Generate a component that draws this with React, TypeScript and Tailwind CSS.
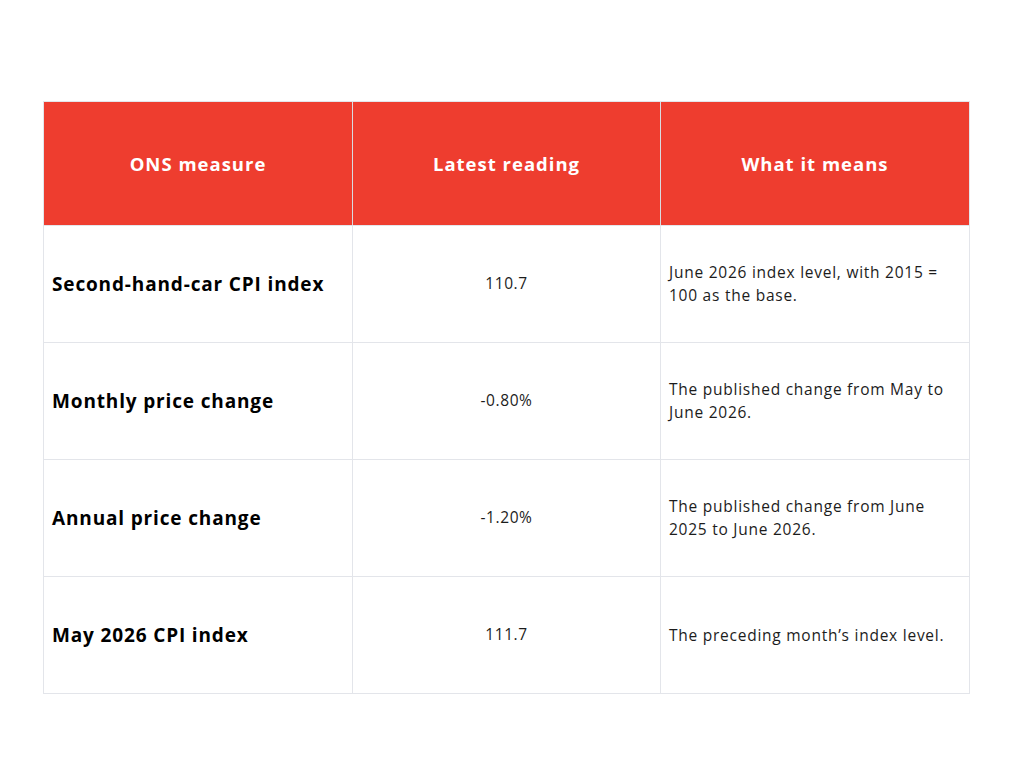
const rows = [
  {
    measure: "Second-hand-car CPI index",
    reading: "110.7",
    meaning: "June 2026 index level, with 2015 = 100 as the base.",
  },
  {
    measure: "Monthly price change",
    reading: "-0.80%",
    meaning: "The published change from May to June 2026.",
  },
  {
    measure: "Annual price change",
    reading: "-1.20%",
    meaning: "The published change from June 2025 to June 2026.",
  },
  {
    measure: "May 2026 CPI index",
    reading: "111.7",
    meaning: "The preceding month\u2019s index level.",
  },
];

export default function App() {
  return (
    <div
      className="w-[1024px] h-[768px] bg-white pt-[101px] pl-[43px]"
      style={{ fontFamily: "'Open Sans', Lato, sans-serif" }}
    >
      <div className="w-[927px] grid grid-cols-[308px_308px_309px] border border-[#e3e5ea]">
        {["ONS measure", "Latest reading", "What it means"].map((h, i) => (
          <div
            key={h}
            className={`h-[123px] bg-[#ee3d2f] flex items-center justify-center text-white font-bold text-[18.5px] tracking-[1px] ${
              i > 0 ? "border-l border-[#d9dbe0]" : ""
            }`}
          >
            {h}
          </div>
        ))}
        {rows.map((r) => (
          <>
            <div
              key={r.measure + "a"}
              className="h-[117px] border-t border-[#e3e5ea] flex items-center px-[8px] text-[19px] font-bold tracking-[0.85px] text-black"
            >
              {r.measure}
            </div>
            <div
              key={r.measure + "b"}
              className="h-[117px] border-t border-l border-[#e3e5ea] flex items-center justify-center text-[15.5px] tracking-[0.6px] text-[#1c1c1c]"
            >
              {r.reading}
            </div>
            <div
              key={r.measure + "c"}
              className="h-[117px] border-t border-l border-[#e3e5ea] flex items-center pl-[8px] pr-[18px] text-[15.5px] tracking-[0.75px] leading-[23px] text-[#1c1c1c]"
            >
              {r.meaning}
            </div>
          </>
        ))}
      </div>
    </div>
  );
}
